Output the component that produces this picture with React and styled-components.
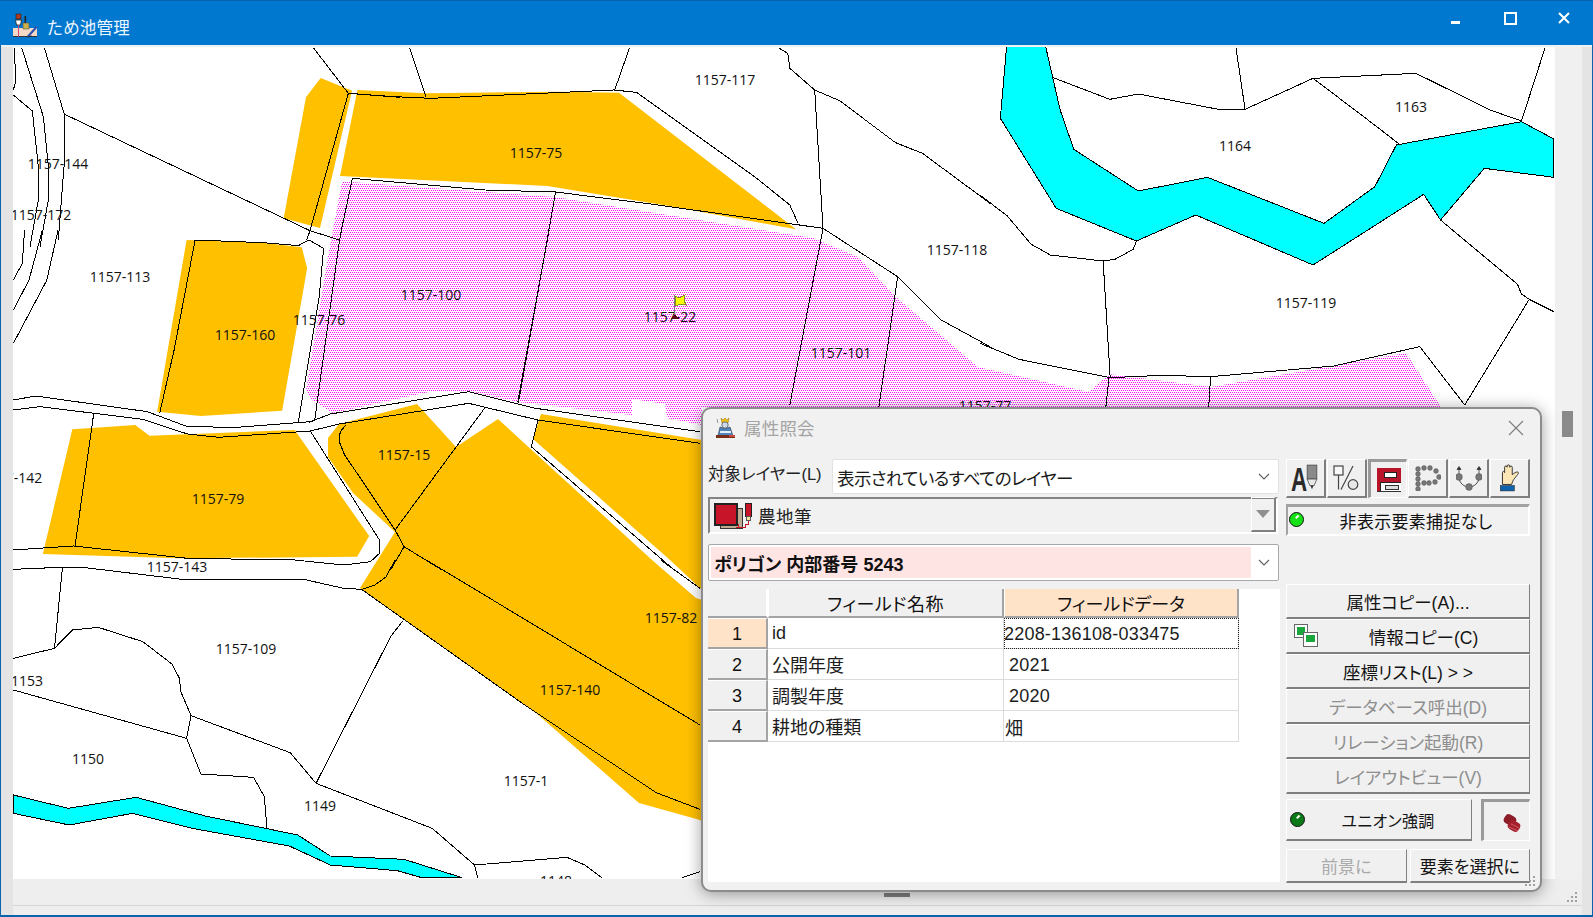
import React from "react";
import styled, { createGlobalStyle } from "styled-components";

const Global = createGlobalStyle`
  html, body { margin: 0; padding: 0; background: #f0f0f0; }
  body { font-family: "Liberation Sans", "Noto Sans CJK JP", sans-serif; font-feature-settings: "palt"; color: #111; }
  #root { width: 1593px; height: 917px; overflow: hidden; }
`;

const Win = styled.div`
  position: relative; width: 1593px; height: 917px; box-sizing: border-box;
  display: flex; flex-direction: column; background: #f0f0f0;
  border-left: 1px solid #0a64ad; border-right: 1px solid #0a64ad; border-bottom: 2px solid #0a64ad;
`;
const TitleBar = styled.header`
  flex: 0 0 45px; box-sizing: border-box; margin: 0 -1px; display: flex; align-items: center;
  background: #0078d0; border-top: 1px solid #0a64ad; color: #fff; padding: 5px 2px 0 13px;
`;
const AppTitle = styled.span`
  font-size: 16.5px; margin-left: 9px; flex: 1; color: #eef6ff; padding-top: 2px; letter-spacing: .3px;
`;
const WinBtn = styled.div`
  width: 54px; height: 34px; display: flex; align-items: center; justify-content: center;
  align-self: flex-start; margin-top: -5px;
`;
const Client = styled.div`
  margin-top: 2px; display: grid;
  grid-template-columns: 12px 1542px 27px 1fr;
  grid-template-rows: 832px 1fr;
  flex: 1;
`;
const LeftGutter = styled.div`background: #e4e4e4; grid-column: 1; grid-row: 1 / 3;`;
const MapBox = styled.div`background: #fff; overflow: hidden; line-height: 0; grid-column: 2; grid-row: 1;`;
const ScrollTrack = styled.div`background: #f0f0f0; padding: 364px 0 0 7px; box-sizing: border-box; grid-column: 3; grid-row: 1;`;
const ScrollThumb = styled.div`width: 11px; height: 26px; background: #8a8a8a;`;
const RightGutter = styled.div`background: #e4e4e4; grid-column: 4; grid-row: 1 / 3;`;
const Status = styled.div`
  grid-column: 2 / 4; grid-row: 2; display: flex; flex-direction: column; background: #eeeeee;
`;
const StatusBand = styled.div`
  height: 26px; border-bottom: 1px solid #d4d4d4;
`;
const Handle = styled.div`
  width: 26px; height: 4px; background: #7e7e7e; margin: 14px 0 0 871px;
`;
const Grip = styled.svg`
  position: absolute; right: ${p => p.$r}px; bottom: ${p => p.$b}px;
`;

const Dialog = styled.section`
  position: absolute; left: 700px; top: 407px; width: 841px; height: 485px; box-sizing: border-box;
  background: #f1f1f1; border: 2px solid #8c8c8c; border-radius: 10px;
  box-shadow: 0 2px 16px rgba(0,0,0,.38);
  display: flex; flex-direction: column;
`;
const DlgHead = styled.div`
  flex: 0 0 41px; display: flex; align-items: center; padding: 0 16px 4px 12px; box-sizing: border-box;
`;
const DlgTitle = styled.span`
  font-size: 17.5px; color: #a4a4a4; margin-left: 8px; flex: 1; letter-spacing: .2px;
`;
const DlgBody = styled.div`
  display: grid; grid-template-columns: 572px 244px; column-gap: 6px; padding: 9px 0 0 5px;
`;
const LeftCol = styled.div`display: flex; flex-direction: column;`;
const RightCol = styled.div`display: flex; flex-direction: column;`;
const LayerRow = styled.div`display: flex; align-items: center; height: 35px;`;
const LayerLabel = styled.label`
  width: 124px; font-size: 16.5px; margin-top: -8px; white-space: nowrap; color: #222;
`;
const Combo = styled.div`
  width: ${p => p.$w}px; height: ${p => p.$h}px; box-sizing: border-box;
  background: #fff; border: 1px solid ${p => p.$line || "#e2e2e2"}; border-radius: 2px;
  display: flex; align-items: center; padding: ${p => p.$pad || "0 8px 0 4px"}; font-size: 17.5px;
  margin: ${p => p.$m || 0};
`;
const ComboValue = styled.span`
  flex: 1; white-space: nowrap; color: #1a1a1a; padding-top: 2px; letter-spacing: -.6px;
`;
const PinkValue = styled.div`
  flex: 1; height: 31px; background: #ffe4e4; display: flex; align-items: center;
  padding-left: 3px; font-weight: 700; font-size: 18px; white-space: nowrap; margin-right: 7px; color: #111;
`;
const Chevron = styled.svg`flex: none; margin-right: ${p => p.$mr || 0}px;`;
const SunkenLayer = styled.div`
  margin-top: 3px; width: 570px; height: 37px; box-sizing: border-box;
  border: 2px solid; border-color: #848484 #fff #fff #848484; display: flex; align-items: center;
  padding-left: 4px; font-size: 17.5px;
`;
const LayerName = styled.span`margin-left: 6px; flex: 1; color: #222; letter-spacing: .5px;`;
const DropBtn = styled.div`
  width: 25px; height: 35px; box-sizing: border-box; border: 1px solid; border-color: #fff #808080 #808080 #fff;
  border-width: 1px 2px 2px 1px; display: flex; align-items: center; justify-content: center; margin-top: -2px;
`;
const GridPanel = styled.div`
  margin-top: 8px; height: 293px; background: #fff;
`;
const Table = styled.div`
  display: grid; grid-template-columns: 60px 236px 235px; grid-template-rows: 29px repeat(4, 31px);
  font-size: 18px;
`;
const Corner = styled.div`background: #f0f0f0; border-bottom: 2px solid #a4a4a4; border-right: 2px solid #fff; box-sizing: border-box;`;
const ColHead = styled.div`
  display: flex; align-items: center; justify-content: center; box-sizing: border-box;
  background: ${p => p.$hot ? "#ffe3c8" : "#f0f0f0"};
  border-right: 2px solid #a4a4a4; border-bottom: 2px solid #a4a4a4; border-left: 1px solid #fff;
  color: #111; letter-spacing: ${p => p.$hot ? 0 : .5}px;
`;
const RowHead = styled.div`
  display: flex; align-items: center; justify-content: center; box-sizing: border-box;
  background: ${p => p.$hot ? "#ffe3c8" : "#f0f0f0"};
  border-right: 2px solid #a4a4a4; border-bottom: 2px solid #a4a4a4; border-top: 1px solid #fff;
  font-size: 18px; padding-top: 2px;
`;
const Cell = styled.div`
  display: flex; align-items: center; box-sizing: border-box; white-space: nowrap;
  padding-left: ${p => p.$pl ?? 4}px; padding-top: ${p => p.$data ? 2 : 0}px;
  letter-spacing: ${p => p.$data ? .2 : 0}px;
  border-right: 1px solid #dcdcdc; border-bottom: 1px solid #dcdcdc;
  outline: ${p => p.$focus ? "1px dotted #222" : "none"}; outline-offset: -1px;
  color: #1c1c1c;
`;
const Tools = styled.div`display: grid; grid-template-columns: repeat(6, 1fr); gap: 1px; height: 39px;`;
const raised = `
  background: #f0f0f0; box-sizing: border-box; border-style: solid; border-width: 1px 2px 2px 1px;
  border-color: #fff #7f7f7f #7f7f7f #fff;
`;
const pressed = `
  border-width: 3px 1px 1px 3px; border-color: #9a9a9a #fff #fff #9a9a9a;
`;
const ToolBtn = styled.button`
  ${raised}
  ${p => p.$on ? pressed : ""}
  padding: 0; display: flex; align-items: center; justify-content: center;
`;
const CapturePanel = styled.div`
  margin: 6px 0 48px; height: 32px; box-sizing: border-box; display: flex;
  border-style: solid; border-width: 3px 2px 2px 2px; border-color: #a2a2a2 #fff #fff #a2a2a2;
  font-size: 17px;
`;
const Led = styled.span`
  flex: none; width: 15px; height: 15px; box-sizing: border-box; border-radius: 50%; margin: ${p => p.$m};
  border: 1.5px solid #111; background: ${p => p.$c}; position: relative;
  &::after { content: ""; position: absolute; left: 5px; top: 3px; width: 4px; height: 1.5px; background: #fff; transform: rotate(-45deg); }
`;
const LedText = styled.span`flex: 1; text-align: center; align-self: center; letter-spacing: .3px;`;
const ActionBtn = styled.button`
  ${raised}
  border-width: 1px 1px 2px 1px; border-color: #fff #7f7f7f #7f7f7f #fff;
  height: 35px; width: 100%; font: inherit; font-size: 17.5px; padding: 0;
  color: ${p => p.$off ? "#8e8e8e" : "#141414"};
  display: flex; align-items: center;
`;
const BtnText = styled.span`flex: 1; text-align: center; white-space: nowrap;`;
const BtnIcon = styled.svg`flex: none; margin-left: 7px;`;
const UnionRow = styled.div`display: flex; justify-content: space-between; margin-top: 5px; height: 42px;`;
const UnionBtn = styled.button`
  ${raised}
  border-width: 1px 1px 2px 1px;
  width: 186px; padding: 0; display: flex; font: inherit; font-size: 16px; color: #141414;
`;
const ToggleBtn = styled.button`
  ${raised}
  ${pressed}
  width: 49px; padding: 0 6px 3px 0; display: flex; align-items: flex-end; justify-content: flex-end;
`;
const FootRow = styled.div`display: flex; gap: 3px; margin-top: 8px;`;
const FootBtn = styled.button`
  ${raised}
  border-width: 1px 1px 2px 1px;
  flex: 1; height: 34px; padding: 0; font: inherit; font-size: 17px;
  color: ${p => p.$off ? "#aaaaaa" : "#141414"};
`;

/* ---------------------------------- map ---------------------------------- */
const ORANGE = "#ffc000";
const Z = ({ o, children }) => (
  <g transform={`translate(${o[0]} ${o[1]}) scale(${1 / o[2]} ${1 / 3})`}>{children}</g>
);
const Z4 = [0, 0, 3], Z8 = [0, 230, 2.24], Z9 = [0, 560, 2.24], Z10 = [340, 40, 2.412], Z11 = [980, 40, 2.558];

const lines = [
  [Z4, [
    "42,143 48,240 40,270", "40,285 97,333 115,500 115,600 90,740",
    "65,143 130,350 145,500 145,600 120,740", "133,143 192,340 192,500 175,720",
    "192,342 930,692 1018,720", "940,143 1045,280 930,692 920,720",
    "1045,280 1200,292",
  ]],
  [Z8, [
    "130,0 105,150 30,340", "95,0 65,150 30,240", "55,0 50,100 30,150",
    "30,510 80,498 330,545 420,590 530,592 695,575 740,552 1050,485 1200,535 1568,605",
    "30,540 90,530 320,568 420,612 490,622 695,603 760,582 1050,520 1205,570 1568,640",
    "437,30 390,360 358,548", "437,30 590,38 668,47 692,30 725,55 715,200 668,578",
    "765,0 760,35 705,570 693,577",
    "1230,0 1160,515", "210,550 168,948",
    "30,960 165,948 420,985 660,990 770,1005 830,995 850,970 850,930 695,603",
    "1088,530 885,900 905,950 990,1020",
    "775,585 762,605 760,635 772,675 800,730 885,900", "905,950 875,1020", "1205,570 1190,650 1510,1020",
  ]],
  [Z9, [
    "30,28 135,22 185,22 420,60 680,58 770,85 810,88", "140,22 122,265",
    "30,295 122,265 162,210 220,202 320,245 385,312 402,355 405,395 428,467 418,535 450,642 568,652 592,710 598,805",
    "30,390 418,535", "428,467 650,578 708,670 968,805 1063,915 1070,953",
    "708,670 875,230 902,183", "810,88 1170,430 1470,698 1568,748", "955,0 1568,495",
    "1063,915 1270,892 1310,915 1348,953", "1528,953 1568,935", "885,0 865,50 840,75 810,88",
    "1480,0 1568,85",
  ]],
  [Z10, [
    "168,25 208,172", "698,25 662,152",
    "20,160 130,170 220,175 520,158 660,150 715,157 1000,410 1085,495 1105,550",
    "30,415 350,450 520,456 750,492 1165,565 1345,710 1450,840 1568,920",
    "30,415 0,590", "520,456 430,1090", "1165,565 1085,1095", "1345,710 1300,1100",
    "1060,25 1080,40 1085,85 1145,150 1165,565", "1145,150 1205,182 1340,308 1405,340 1568,490",
  ]],
  [Z11, [
    "0,465 70,528 130,612 180,645 315,663 345,658 392,628 400,603",
    "185,112 332,178 405,162 610,208 678,208 852,115 1115,100 1305,210 1385,243 1445,25",
    "655,25 678,208", "852,115 1015,260 1072,312", "315,663 333,1013",
    "0,910 100,958 333,1013 465,1006 590,1010 905,978 1125,920 1240,1095 1405,778 1385,762 1375,733 1178,540",
    "1405,778 1468,815", "330,1015 322,1100", "590,1010 585,1100",
  ]],
];

const labels = [
  ["1157-117", 725, 79], ["1163", 1411, 106], ["1157-144", 58, 163], ["1164", 1235, 145],
  ["1157-75", 536, 152], ["1157-172", 41, 214], ["1157-118", 957, 249], ["1157-113", 120, 276],
  ["1157-100", 431, 294], ["1157-22", 670, 316], ["1157-119", 1306, 302], ["1157-160", 245, 334],
  ["1157-76", 319, 319], ["1157-101", 841, 352], ["1157-77", 985, 405], ["1157-142", 12, 477],
  ["1157-15", 404, 454], ["1157-79", 218, 498], ["1157-143", 177, 566], ["1157-82", 671, 617],
  ["1157-109", 246, 648], ["1153", 27, 680], ["1157-140", 570, 689], ["1150", 88, 758],
  ["1157-1", 526, 780], ["1149", 320, 805], ["1148", 556, 880],
];

const MapLabel = styled.text`
  font-family: "Open Sans", "Liberation Sans", sans-serif; font-size: 14px; fill: #111; text-anchor: middle; dominant-baseline: central;
`;

const MapCanvas = () => (
  <svg width="1542" height="832" viewBox="13 47 1542 832">
    <defs>
      <pattern id="dots" width="4" height="4" patternUnits="userSpaceOnUse">
        <g fill="#ff00ff" shapeRendering="crispEdges">
          <rect width="1" height="1" />
          <rect x="2" width="1" height="1" />
          <rect x="1" y="2" width="1" height="1" />
          <rect x="3" y="2" width="1" height="1" />
        </g>
      </pattern>
    </defs>

    <Z o={Z4}><polygon fill={ORANGE} points="962,234 1056,272 960,684 851,655 918,292" /></Z>
    <Z o={Z10}><polygon fill={ORANGE} points="42,150 208,160 520,155 673,158 1100,568 780,495 500,438 0,408" /></Z>
    <Z o={Z8}><polygon fill={ORANGE} points="418,30 590,38 676,52 688,115 632,542 450,558 352,545" /></Z>
    <Z o={Z8}><polygon fill={ORANGE} points="162,598 303,585 335,617 660,600 827,918 800,980 400,985 96,972" /></Z>
    <polygon fill={ORANGE} points="339,424 417,404 456,447 498,419 652,560 696,598 702,600 702,822 700,820 639,803 536,713 360,588 395,532 353,493 328,457 328,438" />
    <polygon fill={ORANGE} points="541,414 702,440 702,590 670,560 533,439" />

    <polygon fill="url(#dots)" points="352,182 555,197 813,238 858,257 896,297 978,367 1089,392 1109,374 1211,387 1406,353 1441,407 702,407 702,425 667,418 665,404 632,399 632,415 518,402 469,391 429,392 333,413 312,400 306,390 328,257 342,182" />

    <Z o={Z11}>
      <polygon fill="#00ffff" stroke="#000" vectorEffect="non-scaling-stroke" strokeWidth="1" shapeRendering="crispEdges"
        points="68,20 168,20 205,210 240,328 405,453 582,412 880,550 1010,440 1065,315 1385,245 1468,297 1468,412 1290,385 1178,540 1135,463 852,675 552,525 400,603 195,505 52,235" />
    </Z>
    <Z o={Z9}>
      <polygon fill="#00ffff" stroke="#000" vectorEffect="non-scaling-stroke" strokeWidth="1" shapeRendering="crispEdges"
        points="30,705 153,745 305,712 460,768 667,825 740,888 905,898 1035,953 945,953 890,932 740,915 648,858 430,805 297,760 155,795 30,760" />
    </Z>

    {lines.map(([o, set], i) => (
      <Z o={o} key={i}>
        {set.map((p, j) => (
          <polyline key={j} points={p} fill="none" stroke="#000" strokeWidth="1" vectorEffect="non-scaling-stroke" shapeRendering="crispEdges" />
        ))}
      </Z>
    ))}

    {labels.map(([t, x, y]) => <MapLabel key={t} x={x} y={y}>{t}</MapLabel>)}

    <g shapeRendering="crispEdges">
      <rect x="674" y="296" width="1" height="22" fill="#777" />
      <polygon points="675,296 679,298 685,295 684,300 686,305 680,304 676,306" fill="#ffff00" stroke="#8a8a20" strokeWidth="1" />
      <polygon points="671,319 675,314 679,319" fill="#5a0a14" />
    </g>
  </svg>
);

/* ---------------------------------- icons --------------------------------- */
const AppIcon = () => (
  <svg width="25" height="25" viewBox="0 0 25 25">
    <rect x="0" y="15" width="24" height="9" fill="#f3d9c6" />
    <rect x="0" y="23" width="24" height="1" fill="#333" />
    <rect x="3" y="1" width="5" height="5" fill="#b33a20" stroke="#222" strokeWidth=".6" />
    <path d="M2.5 7h6l-1 5h-4z" fill="#fff" stroke="#222" strokeWidth=".8" />
    <line x1="5.5" y1="12" x2="5.5" y2="24" stroke="#d1457a" strokeWidth="1" />
    <rect x="11.5" y="3" width="1.6" height="7" fill="#222" />
    <path d="M10 10h6v6h-6z" fill="#c9b24a" stroke="#555" strokeWidth=".6" />
    <path d="M14 23l9-10 1.5 1.5-9 10z" fill="#2c4fb0" />
    <path d="M14 24l5-1" stroke="#222" strokeWidth=".8" />
  </svg>
);
const DlgIcon = () => (
  <svg width="21" height="22" viewBox="0 0 21 22">
    <path d="M2 2c1 1 0 3 1 4" stroke="#999" strokeWidth="1" fill="none" />
    <path d="M6 1l2 2 2-2 2 2 2-2-1 5H7z" fill="#f2c010" stroke="#8a6a00" strokeWidth=".5" />
    <circle cx="10" cy="8" r="3.2" fill="#cfd8e6" stroke="#345" strokeWidth=".7" />
    <path d="M3 19l2-9 5 2 5-2 3 9z" fill="#4f86c0" stroke="#234" strokeWidth=".6" />
    <rect x="5" y="14" width="11" height="2" fill="#e6eef6" />
    <rect x="1" y="18" width="19" height="3" fill="#7a2e18" />
    <rect x="14" y="18" width="6" height="2" fill="#c9463a" />
  </svg>
);
const LayerIcon = () => (
  <svg width="38" height="26" viewBox="0 0 38 26" shapeRendering="crispEdges">
    <rect x="6" y="5" width="22" height="20" fill="#bdaa90" stroke="#333" />
    <rect x="1" y="1" width="22" height="21" fill="#c81428" stroke="#222" strokeWidth="1.4" />
    <rect x="31" y="0" width="6" height="13" fill="#c81428" stroke="#222" />
    <rect x="32" y="13" width="4" height="4" fill="#f4e4a0" stroke="#555" />
    <path d="M34 18v3h-3v3H22" fill="none" stroke="#c81428" />
    <path d="M24 21v4" stroke="#c81428" />
  </svg>
);
const ChevronIcon = ({ mr }) => (
  <Chevron $mr={mr} width="12" height="7" viewBox="0 0 12 7">
    <polyline points="1,1 6,6 11,1" fill="none" stroke="#5e5e5e" strokeWidth="1.1" />
  </Chevron>
);
const Ico = styled.svg`display: block;`;
const G1 = "#444";
const IconText = () => (
  <Ico width="28" height="28" viewBox="0 0 26 26">
    <text x="0" y="25" fontFamily="Liberation Sans" fontSize="31" fontWeight="700" fill="#2a2a2a" textLength="15" lengthAdjust="spacingAndGlyphs">A</text>
    <rect x="15" y="1" width="9" height="13" fill="#8a8a8a" stroke="#444" strokeWidth=".7" />
    <path d="M15 14h9l-2.5 6h-4z" fill="#e8e8e8" stroke="#444" strokeWidth=".7" />
    <path d="M18 20h3l-1.5 3.5z" fill="#333" />
  </Ico>
);
const IconShapes = () => (
  <Ico width="26" height="26" viewBox="0 0 26 26" fill="none" stroke={G1} strokeWidth="1.2">
    <rect x="1" y="1" width="9" height="9" fill="#f8f8f8" />
    <line x1="5.5" y1="10" x2="5.5" y2="24.5" />
    <line x1="20" y1="1" x2="8" y2="24.5" />
    <circle cx="20" cy="19.5" r="4.8" fill="#e8e8e8" />
  </Ico>
);
const IconForm = () => (
  <Ico width="24" height="24" viewBox="0 0 24 24" shapeRendering="crispEdges">
    <rect x="0" y="0" width="24" height="24" fill="#b8142a" />
    <rect x="7" y="4" width="12" height="5" fill="#fff" stroke="#222" />
    <rect x="3" y="14" width="21" height="10" fill="#fff" stroke="#222" />
    <rect x="8" y="17" width="13" height="4" fill="#ddd" stroke="#333" />
    <rect x="0" y="23" width="24" height="1" fill="#333" />
  </Ico>
);
const Dot = ({ x, y, r = 2.4 }) => <circle cx={x} cy={y} r={r} fill="#777" stroke="#444" strokeWidth=".4" />;
const IconPoints = () => (
  <Ico width="26" height="26" viewBox="0 0 26 26">
    {[[3, 4], [3, 9], [3, 14], [3, 19], [3, 24], [9, 3], [15, 3], [21, 6], [24, 12], [20, 17], [14, 18], [9, 18]].map(([x, y]) => <Dot key={`${x}-${y}`} x={x} y={y} />)}
  </Ico>
);
const IconCurve = () => (
  <Ico width="26" height="26" viewBox="0 0 26 26">
    <path d="M3 4v5M23 4v5M3 1.5l-2 3h4zM23 1.5l-2 3h4z" stroke="#333" fill="#333" strokeWidth=".8" />
    <path d="M3 12c0 6 5 10 10 10s10-4 10-10" fill="none" stroke="#444" />
    <Dot x={3} y={12} r={3.4} /><Dot x={23} y={12} r={3.4} /><Dot x={13} y={22} r={3.4} />
  </Ico>
);
const IconHand = () => (
  <Ico width="26" height="28" viewBox="0 0 24 26">
    <path d="M5 19V8c0-1.5 2-1.5 2 0V3c0-1.6 2.3-1.6 2.3 0V2c0-1.6 2.4-1.6 2.4 0v1c0-1.5 2.4-1.5 2.4 0v7c2-2 5-3.5 5.7-2 .5 1-3 4-5.3 8l-1 3z"
      fill="#fbe7b6" stroke="#333" strokeWidth=".9" />
    <rect x="3" y="20" width="13" height="5" fill="#0f62ae" stroke="#222" strokeWidth=".5" />
  </Ico>
);
const CopyIcon = () => (
  <BtnIcon width="24" height="24" viewBox="0 0 24 24" shapeRendering="crispEdges">
    <rect x=".5" y=".5" width="13" height="13" fill="#fff" stroke="#666" />
    <rect x="3" y="3" width="8" height="8" fill="#1aa63a" />
    <rect x="9.5" y="8.5" width="14" height="14" fill="#fff" stroke="#666" />
    <rect x="12" y="11" width="9" height="7" fill="#1aa63a" />
  </BtnIcon>
);
const UnionIcon = () => (
  <svg width="24" height="24" viewBox="0 0 24 24">
    <rect x="5" y="2" width="12" height="10" rx="4" fill="#8e1c28" transform="rotate(30 11 7)" />
    <rect x="9" y="8" width="12" height="10" rx="4" fill="#a3202c" transform="rotate(30 15 13)" />
    <path d="M10 14l9 4M12 11l8 4" stroke="#d86a70" strokeWidth=".8" />
  </svg>
);
const GripDots = ({ r, b }) => (
  <Grip $r={r} $b={b} width="10" height="10" viewBox="0 0 10 10" shapeRendering="crispEdges">
    {[[7, 0], [7, 4], [3, 4], [7, 8], [3, 8], [-1, 8]].map(([x, y]) => (
      <rect key={`${x}-${y}`} x={x + 1} y={y} width="2" height="2" fill="#a0a0a0" />
    ))}
  </Grip>
);

const rows = [
  ["1", "id", "2208-136108-033475", 0, true],
  ["2", "公開年度", "2021", 5, false],
  ["3", "調製年度", "2020", 5, false],
  ["4", "耕地の種類", "畑", 1, false],
];

export default function App() {
  return (
    <>
      <Global />
      <Win>
        <TitleBar>
          <AppIcon />
          <AppTitle>ため池管理</AppTitle>
          <WinBtn>
            <svg width="10" height="8" viewBox="0 0 10 8" style={{ marginTop: 8 }}><rect y="3" width="9" height="3" fill="#fff" /></svg>
          </WinBtn>
          <WinBtn>
            <svg width="13" height="13" viewBox="0 0 13 13"><rect x="1" y="1" width="11" height="11" fill="none" stroke="#fff" strokeWidth="2" /></svg>
          </WinBtn>
          <WinBtn>
            <svg width="12" height="12" viewBox="0 0 12 12"><path d="M1 1l10 10M11 1L1 11" stroke="#fff" strokeWidth="2" /></svg>
          </WinBtn>
        </TitleBar>

        <Client>
          <LeftGutter />
          <MapBox><MapCanvas /></MapBox>
          <ScrollTrack><ScrollThumb /></ScrollTrack>
          <RightGutter />
          <Status>
            <StatusBand><Handle /></StatusBand>
          </Status>
        </Client>
        <GripDots r={15} b={13} />

        <Dialog>
          <DlgHead>
            <DlgIcon />
            <DlgTitle>属性照会</DlgTitle>
            <svg width="16" height="16" viewBox="0 0 16 16"><path d="M1 1l14 14M15 1L1 15" stroke="#7c7c7c" strokeWidth="1.1" /></svg>
          </DlgHead>
          <DlgBody>
            <LeftCol>
              <LayerRow>
                <LayerLabel>対象レイヤー(L)</LayerLabel>
                <Combo $w={447} $h={35}>
                  <ComboValue>表示されているすべてのレイヤー</ComboValue>
                  <ChevronIcon />
                </Combo>
              </LayerRow>
              <SunkenLayer>
                <LayerIcon />
                <LayerName>農地筆</LayerName>
                <DropBtn>
                  <svg width="14" height="8" viewBox="0 0 14 8"><path d="M0 0h14L7 8z" fill="#909090" /></svg>
                </DropBtn>
              </SunkenLayer>
              <Combo $w={571} $h={37} $line="#a8a8a8" $pad="0 8px 0 2px" $m="10px 0 0">
                <PinkValue>ポリゴン 内部番号 5243</PinkValue>
                <ChevronIcon />
              </Combo>
              <GridPanel>
                <Table>
                  <Corner />
                  <ColHead>フィールド名称</ColHead>
                  <ColHead $hot>フィールドデータ</ColHead>
                  {rows.map(([n, name, val, pl, hot]) => (
                    <React.Fragment key={n}>
                      <RowHead $hot={hot}>{n}</RowHead>
                      <Cell>{name}</Cell>
                      <Cell $data $pl={pl} $focus={hot}>{val}</Cell>
                    </React.Fragment>
                  ))}
                </Table>
              </GridPanel>
            </LeftCol>

            <RightCol>
              <Tools>
                <ToolBtn><IconText /></ToolBtn>
                <ToolBtn><IconShapes /></ToolBtn>
                <ToolBtn $on><IconForm /></ToolBtn>
                <ToolBtn><IconPoints /></ToolBtn>
                <ToolBtn><IconCurve /></ToolBtn>
                <ToolBtn><IconHand /></ToolBtn>
              </Tools>
              <CapturePanel>
                <Led $c="#16e016" $m="5px 0 0 1px" />
                <LedText>非表示要素捕捉なし</LedText>
              </CapturePanel>
              <ActionBtn><BtnText>属性コピー(A)...</BtnText></ActionBtn>
              <ActionBtn><CopyIcon /><BtnText>情報コピー(C)</BtnText></ActionBtn>
              <ActionBtn><BtnText>座標リスト(L) &gt; &gt;</BtnText></ActionBtn>
              <ActionBtn $off><BtnText>データベース呼出(D)</BtnText></ActionBtn>
              <ActionBtn $off><BtnText>リレーション起動(R)</BtnText></ActionBtn>
              <ActionBtn $off><BtnText>レイアウトビュー(V)</BtnText></ActionBtn>
              <UnionRow>
                <UnionBtn>
                  <Led $c="#0a7a18" $m="12px 0 0 3px" />
                  <LedText>ユニオン強調</LedText>
                </UnionBtn>
                <ToggleBtn><UnionIcon /></ToggleBtn>
              </UnionRow>
              <FootRow>
                <FootBtn $off>前景に</FootBtn>
                <FootBtn>要素を選択に</FootBtn>
              </FootRow>
            </RightCol>
          </DlgBody>
          <GripDots r={5} b={4} />
        </Dialog>
      </Win>
    </>
  );
}
